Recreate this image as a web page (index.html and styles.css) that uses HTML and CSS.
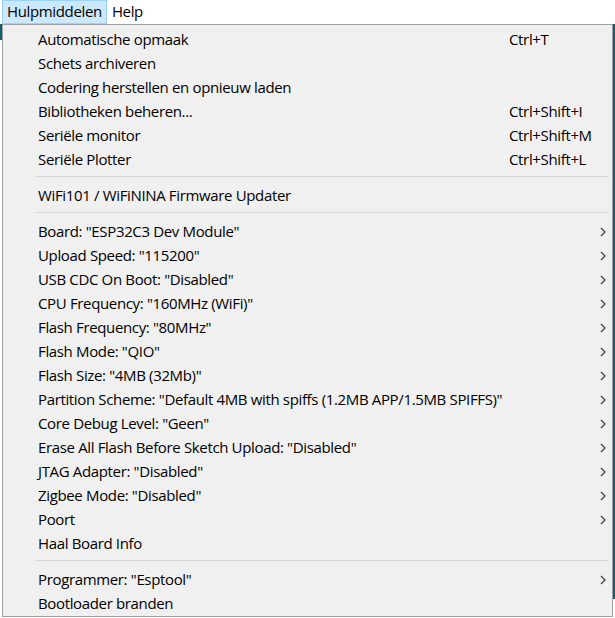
FILE: index.html
```html
<!DOCTYPE html>
<html lang="nl">
<head>
<meta charset="utf-8">
<title>Hulpmiddelen</title>
<link rel="stylesheet" href="styles.css">
</head>
<body>
<div class="menubar">
  <div class="menubar-item active">Hulpmiddelen</div>
  <div class="menubar-item">Help</div>
</div>
<div class="stage">
  <div class="edge edge-left"></div>
  <div class="dropdown">
    <div class="row"><span class="label">Automatische opmaak</span><span class="key">Ctrl+T</span></div>
    <div class="row"><span class="label">Schets archiveren</span></div>
    <div class="row"><span class="label">Codering herstellen en opnieuw laden</span></div>
    <div class="row"><span class="label">Bibliotheken beheren...</span><span class="key">Ctrl+Shift+I</span></div>
    <div class="row"><span class="label">Seriële monitor</span><span class="key">Ctrl+Shift+M</span></div>
    <div class="row"><span class="label">Seriële Plotter</span><span class="key">Ctrl+Shift+L</span></div>
    <div class="sep"></div>
    <div class="row"><span class="label">WiFi101 / WiFiNINA Firmware Updater</span></div>
    <div class="sep"></div>
    <div class="row"><span class="label">Board: "ESP32C3 Dev Module"</span><span class="arrow"><svg width="6" height="10" viewBox="0 0 6 10"><polyline points="1,1 5,5 1,9" fill="none" stroke="#3c3c3c" stroke-width="1.2"/></svg></span></div>
    <div class="row"><span class="label">Upload Speed: "115200"</span><span class="arrow"><svg width="6" height="10" viewBox="0 0 6 10"><polyline points="1,1 5,5 1,9" fill="none" stroke="#3c3c3c" stroke-width="1.2"/></svg></span></div>
    <div class="row"><span class="label">USB CDC On Boot: "Disabled"</span><span class="arrow"><svg width="6" height="10" viewBox="0 0 6 10"><polyline points="1,1 5,5 1,9" fill="none" stroke="#3c3c3c" stroke-width="1.2"/></svg></span></div>
    <div class="row"><span class="label">CPU Frequency: "160MHz (WiFi)"</span><span class="arrow"><svg width="6" height="10" viewBox="0 0 6 10"><polyline points="1,1 5,5 1,9" fill="none" stroke="#3c3c3c" stroke-width="1.2"/></svg></span></div>
    <div class="row"><span class="label">Flash Frequency: "80MHz"</span><span class="arrow"><svg width="6" height="10" viewBox="0 0 6 10"><polyline points="1,1 5,5 1,9" fill="none" stroke="#3c3c3c" stroke-width="1.2"/></svg></span></div>
    <div class="row"><span class="label">Flash Mode: "QIO"</span><span class="arrow"><svg width="6" height="10" viewBox="0 0 6 10"><polyline points="1,1 5,5 1,9" fill="none" stroke="#3c3c3c" stroke-width="1.2"/></svg></span></div>
    <div class="row"><span class="label">Flash Size: "4MB (32Mb)"</span><span class="arrow"><svg width="6" height="10" viewBox="0 0 6 10"><polyline points="1,1 5,5 1,9" fill="none" stroke="#3c3c3c" stroke-width="1.2"/></svg></span></div>
    <div class="row"><span class="label">Partition Scheme: "Default 4MB with spiffs (1.2MB APP/1.5MB SPIFFS)"</span><span class="arrow"><svg width="6" height="10" viewBox="0 0 6 10"><polyline points="1,1 5,5 1,9" fill="none" stroke="#3c3c3c" stroke-width="1.2"/></svg></span></div>
    <div class="row"><span class="label">Core Debug Level: "Geen"</span><span class="arrow"><svg width="6" height="10" viewBox="0 0 6 10"><polyline points="1,1 5,5 1,9" fill="none" stroke="#3c3c3c" stroke-width="1.2"/></svg></span></div>
    <div class="row"><span class="label">Erase All Flash Before Sketch Upload: "Disabled"</span><span class="arrow"><svg width="6" height="10" viewBox="0 0 6 10"><polyline points="1,1 5,5 1,9" fill="none" stroke="#3c3c3c" stroke-width="1.2"/></svg></span></div>
    <div class="row"><span class="label">JTAG Adapter: "Disabled"</span><span class="arrow"><svg width="6" height="10" viewBox="0 0 6 10"><polyline points="1,1 5,5 1,9" fill="none" stroke="#3c3c3c" stroke-width="1.2"/></svg></span></div>
    <div class="row"><span class="label">Zigbee Mode: "Disabled"</span><span class="arrow"><svg width="6" height="10" viewBox="0 0 6 10"><polyline points="1,1 5,5 1,9" fill="none" stroke="#3c3c3c" stroke-width="1.2"/></svg></span></div>
    <div class="row"><span class="label">Poort</span><span class="arrow"><svg width="6" height="10" viewBox="0 0 6 10"><polyline points="1,1 5,5 1,9" fill="none" stroke="#3c3c3c" stroke-width="1.2"/></svg></span></div>
    <div class="row"><span class="label">Haal Board Info</span></div>
    <div class="sep"></div>
    <div class="row"><span class="label">Programmer: "Esptool"</span><span class="arrow"><svg width="6" height="10" viewBox="0 0 6 10"><polyline points="1,1 5,5 1,9" fill="none" stroke="#3c3c3c" stroke-width="1.2"/></svg></span></div>
    <div class="row"><span class="label">Bootloader branden</span></div>
  </div>
  <div class="edge edge-right"></div>
</div>
</body>
</html>
```

FILE: styles.css
```css
html, body {
  margin: 0;
  padding: 0;
  background: #ffffff;
}
body {
  width: 615px;
  height: 618px;
  overflow: hidden;
  font-family: "Open Sans", "Noto Sans", sans-serif;
  font-size: 15px;
  letter-spacing: -0.35px;
  color: #000000;
}
.menubar {
  display: flex;
  height: 24px;
  padding-left: 2px;
  background: #ffffff;
}
.menubar-item {
  box-sizing: border-box;
  height: 24px;
  line-height: 21px;
  padding: 0 4px;
  border: 1px solid transparent;
}
.menubar-item.active {
  background: #cce8ff;
  border-color: #99d1ff;
}
.stage {
  display: flex;
  align-items: flex-start;
}
.edge {
  width: 2px;
  flex: none;
  align-self: stretch;
}
.edge-left {
  background: linear-gradient(#0b6165 0, #0b6165 16px, #ffffff 16px);
}
.edge-right {
  background: linear-gradient(#0b6165 0, #0b6165 575px, #ffffff 575px);
}
.dropdown {
  box-sizing: border-box;
  width: 611px;
  border: 1px solid #a0a0a0;
  background: #f0f0f0;
  padding: 3px 0 0;
  display: flex;
  flex-direction: column;
}
.row {
  display: grid;
  grid-template-columns: 35px 471px 1fr 12px;
  height: 24px;
  line-height: 22px;
  white-space: nowrap;
}
.label {
  grid-column: 2;
}
.key {
  grid-column: 3;
}
.arrow {
  grid-column: 4;
  display: flex;
  align-items: center;
}
.arrow svg {
  display: block;
}
.sep {
  height: 1px;
  margin: 4px 3px 7px 32px;
  background: #d7d7d7;
}
```
